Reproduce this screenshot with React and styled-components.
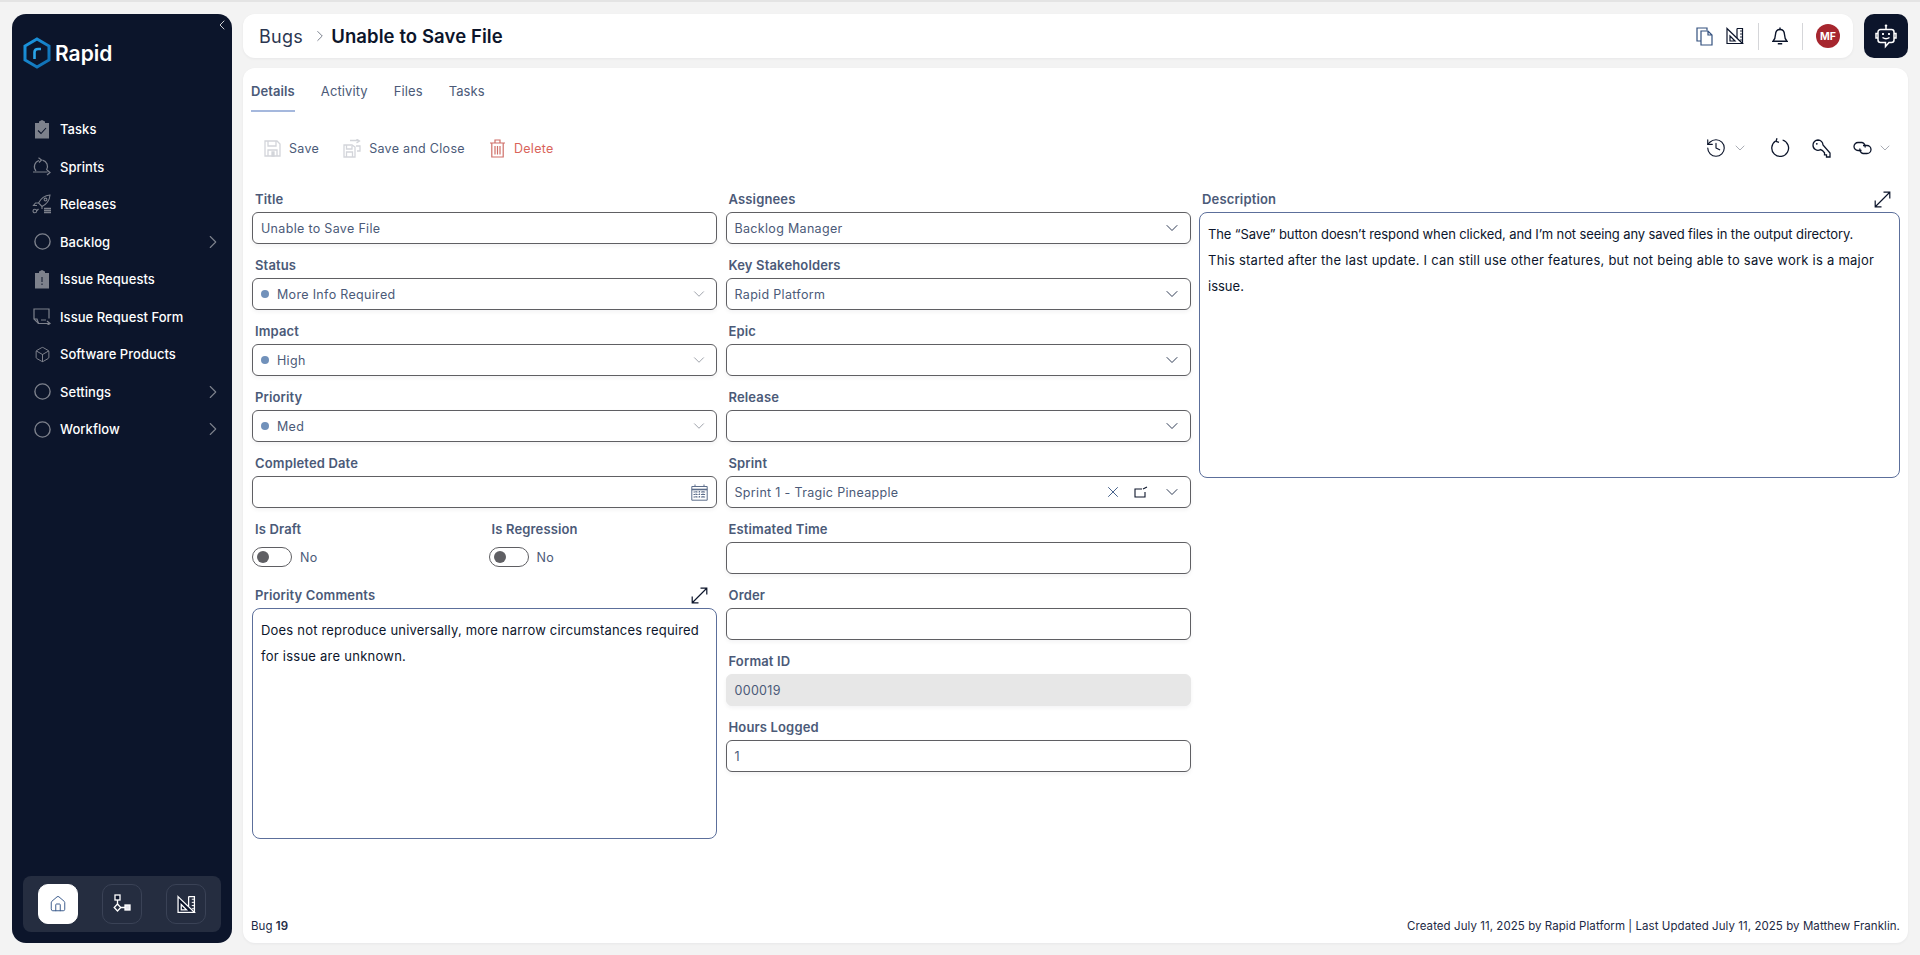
import React from 'react'
import styled, { createGlobalStyle } from 'styled-components'
import { Box, ChevronDown, ChevronLeft, ChevronRight, House, X, History } from 'lucide-react'

const Global = createGlobalStyle`
    * { box-sizing: border-box; }
    html, body { margin: 0; height: 100%; }
    body {
        background: #f3f3f3;
        border-top: 2px solid #e4e4e4;
        font-family: Inter, "Open Sans", "Liberation Sans", sans-serif;
        color: #0c152b;
        overflow: hidden;
    }
`

const SetSquare = ({ size = 18, color = '#0c152b', fill = 'none' }) => (
    <svg width={size} height={size} viewBox="0 0 18 18" fill="none" stroke={color} strokeWidth="1.2">
        <path d="M1 1.5 L16.5 16.5 H1 Z" fill={fill} />
        <path d="M4 9 L9 14 H4 Z" />
        <path d="M11 1.5 H16.5 V16.5 M11 1.5 V11" />
        <path d="M14 4h2.5M14 7h2.5M14 10h2.5M14 13h2.5" strokeWidth="0.9" />
    </svg>
)

const Expand = () => (
    <svg width="17" height="17" viewBox="0 0 17 17" fill="none" stroke="#0c152b" strokeWidth="1.2">
        <path d="M1.5 15.5 L15.5 1.5 M9.5 1.2 H15.8 V7.5 M1.2 9.5 V15.8 H7.5" />
    </svg>
)

const FloppyIcon = () => (
    <svg width="17" height="17" viewBox="0 0 17 17" fill="none" stroke="#d3d5da" strokeWidth="1.3">
        <path d="M1 1 H13 L16 4 V16 H1 Z" />
        <path d="M4 1 V6 H12 V1" />
        <path d="M4 16 V10 H13 V16" />
        <path d="M8 12h2v4h-2z" fill="#d3d5da" />
    </svg>
)

const FloppyArrowIcon = () => (
    <svg width="18" height="19" viewBox="0 0 18 19" fill="none" stroke="#d3d5da" strokeWidth="1.3">
        <path d="M1 6 H9 L12 8 V18 H1 Z" />
        <path d="M3.5 6 V10 H9 V7" />
        <path d="M3.5 18 V13 H9.5 V18" />
        <path d="M7 1.5 H16 M13.5 0 L16.5 2 L13.5 4 M13 7 H17 V12 H14" />
    </svg>
)

const TrashIcon = () => (
    <svg width="17" height="19" viewBox="0 0 17 19" fill="none" stroke="#cf6f68" strokeWidth="1.2">
        <path d="M1 4 H16 M6 4 V1 H11 V4 M2.8 4 V18 H14.2 V4" />
        <path d="M6 7 V15.5 M8.5 7 V15.5 M11 7 V15.5" />
    </svg>
)

const RefreshIcon = () => (
    <svg width="20" height="20" viewBox="0 0 20 20" fill="none" stroke="#0c152b" strokeWidth="1.3">
        <path d="M5.6 3 A8.4 8.4 0 1 0 12.6 2" />
        <path d="M7 0.2 L6 3.4 L9 4.4" />
    </svg>
)

const KeyIcon = () => (
    <svg width="19" height="19" viewBox="0 0 19 19" fill="none" stroke="#0c152b" strokeWidth="1.3">
        <path d="M1 6 A5 5 0 0 1 6 1 A5.3 5.3 0 0 1 11 6 L18 14 V18 H14.5 V15.8 H12.5 V13.8 L10.5 11.6 L8.5 10.6 A5 5 0 0 1 1 6 Z" />
        <circle cx="4.8" cy="4.8" r="0.9" fill="#0c152b" stroke="none" />
    </svg>
)

const LinkIcon = () => (
    <svg width="19" height="14" viewBox="0 0 19 14" fill="none" stroke="#0c152b" strokeWidth="1.3">
        <path d="M8.5 9.5 H5 A4 4 0 0 1 5 1.5 H9 A4 4 0 0 1 12 6.5" />
        <path d="M10 4.5 H14 A4 4 0 0 1 14 12.5 H10 A4 4 0 0 1 7 7.5" />
    </svg>
)

const CopyIcon = () => (
    <svg width="17" height="19" viewBox="0 0 17 19" fill="none" stroke="#33507e" strokeWidth="1.2">
        <path d="M11 3.5 V1 H1 V14 H5" />
        <path d="M5 4 H12 L16 8 V18 H5 Z M12 4 V8 H16" />
    </svg>
)

const BellIcon = () => (
    <svg width="16" height="19" viewBox="0 0 16 19" fill="none" stroke="#0c152b" strokeWidth="1.4">
        <path d="M8 2.5 C5 2.5 3.6 4.8 3.5 7.5 C3.4 10.5 2.8 12.5 1 14.2 H15 C13.2 12.5 12.6 10.5 12.5 7.5 C12.4 4.8 11 2.5 8 2.5 Z" />
        <path d="M8 0.5 V2.5 M5.8 16.8 H10.2" />
    </svg>
)

const BotIcon = () => (
    <svg width="22" height="25" viewBox="0 0 22 25" fill="none" stroke="#fff" strokeWidth="1.5">
        <circle cx="11" cy="1.8" r="1.3" fill="#fff" stroke="none" />
        <path d="M11 3 V5.5" />
        <path d="M5.5 5.5 H16.5 A2.5 2.5 0 0 1 19 8 V16 A2.5 2.5 0 0 1 16.5 18.5 H14 L10.5 22.5 V18.5 H5.5 A2.5 2.5 0 0 1 3 16 V8 A2.5 2.5 0 0 1 5.5 5.5 Z" />
        <path d="M3 9.5 H1 V14 H3 M19 9.5 H21 V14 H19" />
        <path d="M8 9 V11 M14 9 V11" strokeWidth="1.8" />
        <path d="M7.5 13.5 Q11 16 14.5 13.5" />
    </svg>
)

const CalendarIcon = () => (
    <svg width="17" height="17" viewBox="0 0 17 17" fill="none" stroke="#5c6d8a" strokeWidth="1">
        <path d="M0.8 2.5 H16.2 V16.2 H0.8 Z" />
        <path d="M0.8 5.5 H16.2" strokeWidth="1.6" />
        <path d="M4 0.5 V3 M13 0.5 V3" />
        <path d="M2.5 8 H14.5 M2.5 10.5 H14.5 M2.5 13 H14.5 M5 7 V14.5 M8.5 7 V14.5 M12 7 V14.5" strokeWidth="1.1" strokeDasharray="1.6 0.9" />
    </svg>
)

const Logo = () => (
    <svg width="28" height="32" viewBox="0 0 28 32" fill="none">
        <defs>
            <linearGradient id="hex" x1="0" y1="0" x2="1" y2="1">
                <stop offset="0" stopColor="#1c98e2" />
                <stop offset="1" stopColor="#0f6cb0" />
            </linearGradient>
        </defs>
        <path d="M14 2 L26 9 V23 L14 30 L2 23 V9 Z" stroke="url(#hex)" strokeWidth="3" />
        <path d="M11.5 22 V15 Q11.5 12 15 12 H18" stroke="#2aa5ea" strokeWidth="2.6" />
    </svg>
)

const TasksNavIcon = ({ mark }) => (
    <svg width="16" height="19" viewBox="0 0 16 19">
        <path d="M1 3 H5 V1.5 L8 0 L11 1.5 V3 H15 V18.5 H1 Z" fill="#7d818c" />
        {mark === 'check'
            ? <path d="M4 10.5 L7 13.5 L12 8" fill="none" stroke="#0c152b" strokeWidth="1.1" />
            : <path d="M8 7 V12 M8 13.5 V15" fill="none" stroke="#0c152b" strokeWidth="1" />}
    </svg>
)

const SprintNavIcon = () => (
    <svg width="20" height="19" viewBox="0 0 20 19" fill="none" stroke="#7d818c" strokeWidth="1.2">
        <path d="M4 14 A6.5 6.5 0 0 1 7 3.5 M10.5 3.2 A6.5 6.5 0 0 1 14.5 13" />
        <path d="M6.5 0.8 L9.5 3 L7 5.5" />
        <path d="M1 15 H15.5 M15 13 L18 15.5 L15 18" />
    </svg>
)

const RocketNavIcon = () => (
    <svg width="20" height="20" viewBox="0 0 20 20" fill="none" stroke="#7d818c" strokeWidth="1.1">
        <path d="M18 1 C13 1.5 9 4 6.5 9 L10 12.5 C14 10.5 17.5 7 18 1 Z" />
        <circle cx="13.5" cy="5.5" r="1.4" />
        <path d="M6.5 9 H3.5 L1.5 11.5 L5 11.5 M10 12.5 V15" />
        <circle cx="2.8" cy="17" r="1.8" />
        <path d="M6.5 15 L4.5 17" />
        <path d="M12 14.5h7M12 16.5h7M12 18.5h7" strokeWidth="1.5" />
    </svg>
)

const FormNavIcon = () => (
    <svg width="18" height="17" viewBox="0 0 18 17" fill="none" stroke="#7d818c" strokeWidth="1.2">
        <path d="M16 10.5 V1 H1 V11 L5.5 15.5 H8" />
        <path d="M1 11 H4 L5.5 15.5" />
        <path d="M6 15.5 H16.5 M14 13 L17 15.5 L14 17.5 M8 12 H13" />
    </svg>
)

const RingNavIcon = () => (
    <svg width="17" height="17" viewBox="0 0 17 17" fill="none" stroke="#7d818c" strokeWidth="1.4">
        <circle cx="8.5" cy="8.5" r="7.6" />
    </svg>
)

const WorkflowIcon = () => (
    <svg width="18" height="20" viewBox="0 0 18 20" fill="none" stroke="#fff" strokeWidth="1.3">
        <rect x="2" y="1" width="5" height="5" fill="#0c152b" />
        <path d="M4.5 6 V10.5 M8 13.5 H12" />
        <path d="M4.5 10 L7.8 13.5 L4.5 17 L1.2 13.5 Z" />
        <rect x="12" y="11" width="5" height="5" fill="#e8e8f0" />
    </svg>
)

const menu = [
    { label: 'Tasks', icon: <TasksNavIcon mark="check" /> },
    { label: 'Sprints', icon: <SprintNavIcon /> },
    { label: 'Releases', icon: <RocketNavIcon /> },
    { label: 'Backlog', icon: <RingNavIcon />, more: true },
    { label: 'Issue Requests', icon: <TasksNavIcon mark="alert" /> },
    { label: 'Issue Request Form', icon: <FormNavIcon /> },
    { label: 'Software Products', icon: <Box size={17} color="#7d818c" strokeWidth={1.4} /> },
    { label: 'Settings', icon: <RingNavIcon />, more: true },
    { label: 'Workflow', icon: <RingNavIcon />, more: true },
]

const Select = ({ value, dot, clearable }) => (
    <Control>
        {dot && <Dot />}
        <Value>{value}</Value>
        {clearable && (
            <Actions>
                <X size={18} color="#33507e" strokeWidth={1.2} />
                <svg width="14" height="12" viewBox="0 0 14 12" fill="none" stroke="#0c152b" strokeWidth="1.1">
                    <path d="M8 3 H1 V11 H11 V6 M9 3 L13 1" />
                </svg>
            </Actions>
        )}
        <ChevronDown size={dot ? 18 : 20} color={dot ? '#8b8f99' : '#1d2a45'} strokeWidth={1.1} />
    </Control>
)

const Field = ({ label, children }) => (
    <FieldWrap>
        <FieldLabel>{label}</FieldLabel>
        {children}
    </FieldWrap>
)

const App = () => {
    return (
        <Page>
            <Global />
            <Sidebar>
                <Collapse><ChevronLeft size={16} color="#fff" strokeWidth={1.2} /></Collapse>
                <Brand>
                    <Logo />
                    <BrandName>Rapid</BrandName>
                </Brand>
                <Menu>
                    {menu.map(item => (
                        <MenuItem key={item.label}>
                            <MenuIcon>{item.icon}</MenuIcon>
                            <MenuLabel>{item.label}</MenuLabel>
                            {item.more && <MoreIcon><ChevronRight size={22} color="#7d818c" strokeWidth={1.2} /></MoreIcon>}
                        </MenuItem>
                    ))}
                </Menu>
                <Dock>
                    <DockButton $active><House size={18} color="#3a5a8c" strokeWidth={1.3} /></DockButton>
                    <DockButton><WorkflowIcon /></DockButton>
                    <DockButton><SetSquare size={19} color="#fff" fill="#0c152b" /></DockButton>
                </Dock>
            </Sidebar>
            <Content>
                <TopRow>
                    <Header>
                        <Crumb>Bugs</Crumb>
                        <ChevronRight size={18} color="#6b7280" strokeWidth={1.2} />
                        <CrumbTitle>Unable to Save File</CrumbTitle>
                        <HeaderTools>
                            <CopyIcon />
                            <SetSquare size={18} />
                            <Divider />
                            <BellIcon />
                            <Divider />
                            <Avatar>MF</Avatar>
                        </HeaderTools>
                    </Header>
                    <BotButton><BotIcon /></BotButton>
                </TopRow>
                <Panel>
                    <Tabs>
                        <Tab $active>Details</Tab>
                        <Tab>Activity</Tab>
                        <Tab>Files</Tab>
                        <Tab>Tasks</Tab>
                    </Tabs>
                    <Toolbar>
                        <ToolButton><FloppyIcon />Save</ToolButton>
                        <ToolButton><FloppyArrowIcon />Save and Close</ToolButton>
                        <ToolButton $danger><TrashIcon />Delete</ToolButton>
                        <ToolIcons>
                            <IconPair>
                                <History size={22} color="#0c152b" strokeWidth={1.25} />
                                <ChevronDown size={16} color="#8b8f99" strokeWidth={1.1} />
                            </IconPair>
                            <RefreshIcon />
                            <KeyIcon />
                            <IconPair>
                                <LinkIcon />
                                <ChevronDown size={16} color="#8b8f99" strokeWidth={1.1} />
                            </IconPair>
                        </ToolIcons>
                    </Toolbar>
                    <FormGrid>
                        <Column>
                            <Field label="Title"><Control><Value>Unable to Save File</Value></Control></Field>
                            <Field label="Status"><Select value="More Info Required" dot /></Field>
                            <Field label="Impact"><Select value="High" dot /></Field>
                            <Field label="Priority"><Select value="Med" dot /></Field>
                            <Field label="Completed Date">
                                <Control>
                                    <Value />
                                    <CalendarIcon />
                                </Control>
                            </Field>
                            <Toggles>
                                <Field label="Is Draft"><ToggleRow><Toggle /><ToggleText>No</ToggleText></ToggleRow></Field>
                                <Field label="Is Regression"><ToggleRow><Toggle /><ToggleText>No</ToggleText></ToggleRow></Field>
                            </Toggles>
                            <AreaField>
                                <AreaHead>
                                    <AreaLabel>Priority Comments</AreaLabel>
                                    <Expand />
                                </AreaHead>
                                <TextBox $height={231}>
                                    <Line $track={0.2}>Does not reproduce universally, more narrow circumstances required</Line>
                                    <Line $track={0.25}>for issue are unknown.</Line>
                                </TextBox>
                            </AreaField>
                        </Column>
                        <Column>
                            <Field label="Assignees"><Select value="Backlog Manager" /></Field>
                            <Field label="Key Stakeholders"><Select value="Rapid Platform" /></Field>
                            <Field label="Epic"><Select /></Field>
                            <Field label="Release"><Select /></Field>
                            <Field label="Sprint"><Select value="Sprint 1 - Tragic Pineapple" clearable /></Field>
                            <Field label="Estimated Time"><Control /></Field>
                            <Field label="Order"><Control /></Field>
                            <Field label="Format ID"><Control $disabled><Value>000019</Value></Control></Field>
                            <Field label="Hours Logged"><Control><Value>1</Value></Control></Field>
                        </Column>
                        <Column>
                            <AreaField>
                                <AreaHead>
                                    <AreaLabel>Description</AreaLabel>
                                    <Expand />
                                </AreaHead>
                                <TextBox $height={266}>
                                    <Line $track={-0.11}>The “Save” button doesn’t respond when clicked, and I’m not seeing any saved files in the output directory.</Line>
                                    <Line $track={0.24}>This started after the last update. I can still use other features, but not being able to save work is a major</Line>
                                    <Line>issue.</Line>
                                </TextBox>
                            </AreaField>
                        </Column>
                    </FormGrid>
                    <Footer>
                        <span>Bug <strong>19</strong></span>
                        <span>Created July 11, 2025 by Rapid Platform | Last Updated July 11, 2025 by Matthew Franklin.</span>
                    </Footer>
                </Panel>
            </Content>
        </Page>
    )
}

const Page = styled.div`
    height: calc(100vh - 2px);
    display: flex;
    gap: 11px;
    padding: 12px 12px 12px;
`

const Sidebar = styled.aside`
    position: relative;
    width: 220px;
    flex: none;
    background: #0c152b;
    border-radius: 14px;
    display: flex;
    flex-direction: column;
    padding: 0 11px 11px;
`

const Collapse = styled.div`
    position: absolute;
    top: 3px;
    right: 2px;
`

const Brand = styled.div`
    display: flex;
    align-items: center;
    gap: 4px;
    height: 32px;
    margin-top: 23px;
`

const BrandName = styled.div`
    color: #fff;
    font-size: 21px;
    font-weight: 600;
`

const Menu = styled.nav`
    display: flex;
    flex-direction: column;
    margin-top: 41.5px;
    flex: 1;
`

const MenuItem = styled.div`
    height: 37.5px;
    display: flex;
    align-items: center;
    padding: 0 0 0 8px;
`

const MenuIcon = styled.span`
    width: 22px;
    height: 22px;
    display: flex;
    align-items: center;
    justify-content: center;
    margin-right: 7px;
`

const MenuLabel = styled.span`
    flex: 1;
    color: #fff;
    font-size: 13px;
    font-weight: 500;
    letter-spacing: 0.05px;
`

const MoreIcon = styled.span`
    display: flex;
    margin-right: -3px;
`

const Dock = styled.div`
    height: 56px;
    background: #252d40;
    border-radius: 8px;
    display: flex;
    align-items: center;
    justify-content: space-between;
    padding: 0 15px;
`

const DockButton = styled.div`
    width: 40px;
    height: 40px;
    border-radius: 10px;
    display: flex;
    align-items: center;
    justify-content: center;
    background: ${p => (p.$active ? '#fff' : 'transparent')};
    border: 1px solid ${p => (p.$active ? '#fff' : '#3a4256')};
`

const Content = styled.main`
    flex: 1;
    min-width: 0;
    display: flex;
    flex-direction: column;
    gap: 10px;
`

const TopRow = styled.div`
    display: flex;
    gap: 11px;
    height: 44px;
`

const Header = styled.header`
    flex: 1;
    background: #fff;
    border-radius: 12px;
    display: flex;
    align-items: center;
    gap: 5px;
    padding: 0 13px 0 16px;
    box-shadow: 0 1px 3px rgba(12, 21, 43, 0.05);
`

const Crumb = styled.span`
    font-size: 18px;
    letter-spacing: 0.3px;
    color: #2b3650;
    margin-right: 3px;
`

const CrumbTitle = styled.span`
    font-size: 18.5px;
    font-weight: 600;
    letter-spacing: 0.1px;
    color: #0c152b;
    margin-left: -3px;
`

const HeaderTools = styled.div`
    margin-left: auto;
    display: flex;
    align-items: center;
    gap: 13.5px;
`

const Divider = styled.span`
    width: 1px;
    height: 27px;
    background: #d5d6d9;
`

const Avatar = styled.span`
    width: 24px;
    height: 24px;
    border-radius: 50%;
    background: #a6262e;
    color: #fff;
    font-size: 10.5px;
    font-weight: 700;
    display: flex;
    align-items: center;
    justify-content: center;
`

const BotButton = styled.div`
    width: 44px;
    border-radius: 10px;
    background: #0c152b;
    display: flex;
    align-items: center;
    justify-content: center;
`

const Panel = styled.section`
    flex: 1;
    background: #fff;
    border-radius: 12px;
    display: flex;
    flex-direction: column;
    padding: 0 8px;
    box-shadow: 0 1px 3px rgba(12, 21, 43, 0.05);
`

const Tabs = styled.div`
    height: 44px;
    display: flex;
    gap: 26px;
`

const Tab = styled.div`
    display: flex;
    align-items: center;
    height: 44px;
    padding-top: 3px;
    font-size: 13px;
    letter-spacing: 0.1px;
    font-weight: ${p => (p.$active ? 600 : 400)};
    color: #4b5a78;
    border-bottom: 2px solid ${p => (p.$active ? '#a5b8dd' : 'transparent')};
`

const Toolbar = styled.div`
    height: 48px;
    margin-top: 12px;
    display: flex;
    align-items: center;
    gap: 24px;
    padding: 0 7px 0 13px;
`

const ToolButton = styled.div`
    display: flex;
    align-items: center;
    gap: 8px;
    font-size: 12.5px;
    letter-spacing: 0.3px;
    color: ${p => (p.$danger ? '#d9645a' : '#4b5a78')};
`

const ToolIcons = styled.div`
    margin-left: auto;
    display: flex;
    align-items: center;
    gap: 22px;
`

const IconPair = styled.div`
    display: flex;
    align-items: center;
    gap: 5px;
`

const FormGrid = styled.div`
    flex: 1;
    margin-top: 6px;
    display: grid;
    grid-template-columns: 465px 465px 701px;
    column-gap: 8.5px;
    align-content: start;
    padding: 0 0 0 1px;
`

const Column = styled.div`
    display: flex;
    flex-direction: column;
`

const FieldWrap = styled.div`
    height: 66px;
    display: flex;
    flex-direction: column;
`

const labelText = `
    font-size: 13px;
    font-weight: 600;
    letter-spacing: 0.15px;
    color: #4b5a78;
    line-height: 20px;
`

const FieldLabel = styled.label`
    ${labelText}
    padding-left: 3px;
    margin-top: 11px;
    margin-bottom: 3px;
`

const Control = styled.div`
    height: 32px;
    flex: none;
    display: flex;
    align-items: center;
    gap: 8px;
    padding: 0 8px;
    border-radius: 6px;
    background: ${p => (p.$disabled ? '#e7e7e7' : '#fff')};
    border: 1px solid ${p => (p.$disabled ? '#e7e7e7' : '#5f5f63')};
    box-shadow: 0 2px 4px rgba(12, 21, 43, 0.05);
`

const Value = styled.span`
    flex: 1;
    font-size: 12.5px;
    letter-spacing: 0.32px;
    color: #4b5a78;
`

const Dot = styled.span`
    width: 8px;
    height: 8px;
    border-radius: 50%;
    background: #7191ba;
`

const Actions = styled.span`
    display: flex;
    align-items: center;
    gap: 12px;
    margin-right: 6px;
`

const Toggles = styled.div`
    display: grid;
    grid-template-columns: 1fr 1fr;
    column-gap: 8px;
    height: 66px;
`

const ToggleRow = styled.div`
    display: flex;
    align-items: center;
    gap: 8px;
    margin-top: 5px;
`

const Toggle = styled.span`
    width: 40px;
    height: 20px;
    border: 1px solid #5f5f63;
    border-radius: 10px;
    display: flex;
    align-items: center;
    padding-left: 4px;
    &::before {
        content: '';
        width: 12px;
        height: 12px;
        border-radius: 50%;
        background: #5f5f63;
    }
`

const ToggleText = styled.span`
    font-size: 12.5px;
    letter-spacing: 0.3px;
    color: #4b5a78;
`

const AreaField = styled.div`
    display: flex;
    flex-direction: column;
`

const AreaHead = styled.div`
    display: flex;
    align-items: center;
    justify-content: space-between;
    padding: 11px 9px 3px 3px;
    height: 34px;
`

const AreaLabel = styled.label`
    ${labelText}
`

const TextBox = styled.div`
    height: ${p => p.$height}px;
    padding: 7.5px 8px;
    border: 1px solid #5c6f9b;
    border-radius: 8px;
    font-size: 13px;
    line-height: 26px;
    color: #0c152b;
`

const Line = styled.div`
    letter-spacing: ${p => p.$track || 0}px;
    white-space: nowrap;
`

const Footer = styled.footer`
    height: 34px;
    display: flex;
    justify-content: space-between;
    align-items: center;
    font-size: 11.5px;
    letter-spacing: 0.06px;
    color: #1d2a45;
    strong { font-weight: 600; }
`

export default App
